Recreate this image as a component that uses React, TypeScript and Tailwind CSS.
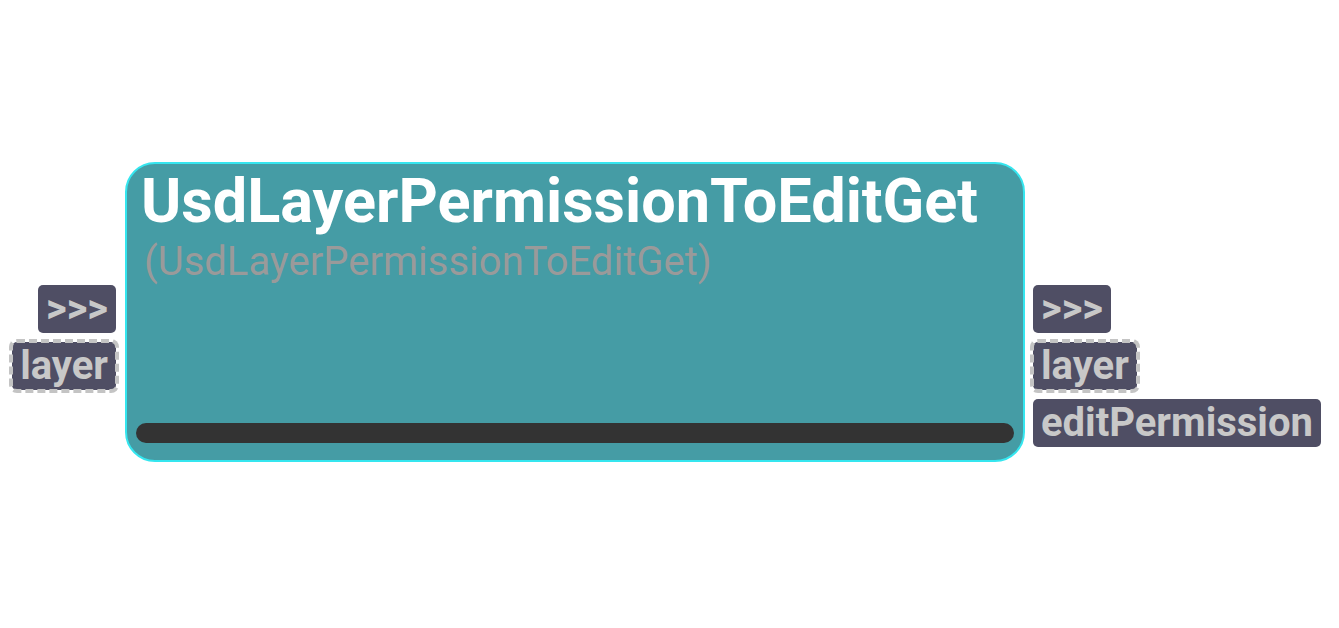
import React from "react"

type Pin = { label: string; dashed?: boolean }

const leftPins: Pin[] = [{ label: ">>>" }, { label: "layer", dashed: true }]
const rightPins: Pin[] = [
  { label: ">>>" },
  { label: "layer", dashed: true },
  { label: "editPermission" },
]

const PinTag = ({ pin }: { pin: Pin }) => (
  <div className="relative h-[48px] rounded-[5px] bg-[#4f4e64] px-[8px] text-[40px] leading-[48px] font-bold text-[#c8c8c8]">
    {pin.label}
    {pin.dashed && (
      // dashed connection ring around the tag
      <div className="pointer-events-none absolute -inset-[3px] rounded-[8px] border-[4px] border-dashed border-[#c4c4c4]" />
    )}
  </div>
)

export default function App() {
  return (
    <div className="h-[628px] w-[1339px] bg-white font-['Roboto',sans-serif]">
      <div className="flex items-start pt-[162px]">
        {/* inputs */}
        <div className="flex w-[125px] flex-col items-end gap-[9px] pt-[123px] pr-[9px]">
          {leftPins.map((pin, i) => (
            <PinTag key={i} pin={pin} />
          ))}
        </div>

        {/* node body */}
        <div className="flex h-[300px] w-[900px] flex-col rounded-[30px] border-2 border-[#35e6ef] bg-[#459ca5]">
          <div className="pl-[14px] pt-[7px] text-[61.2px] leading-[61px] font-bold whitespace-nowrap text-white">
            UsdLayerPermissionToEditGet
          </div>
          <div className="mt-[10px] pl-[17px] text-[40px] leading-[40px] whitespace-nowrap text-[#9a9a9a]">
            (UsdLayerPermissionToEditGet)
          </div>
          <div className="mx-[9px] mt-auto mb-[17px] h-[20px] rounded-full bg-[#333333]" />
        </div>

        {/* outputs */}
        <div className="flex flex-col items-start gap-[9px] pt-[123px] pl-[8px]">
          {rightPins.map((pin, i) => (
            <PinTag key={i} pin={pin} />
          ))}
        </div>
      </div>
    </div>
  )
}
